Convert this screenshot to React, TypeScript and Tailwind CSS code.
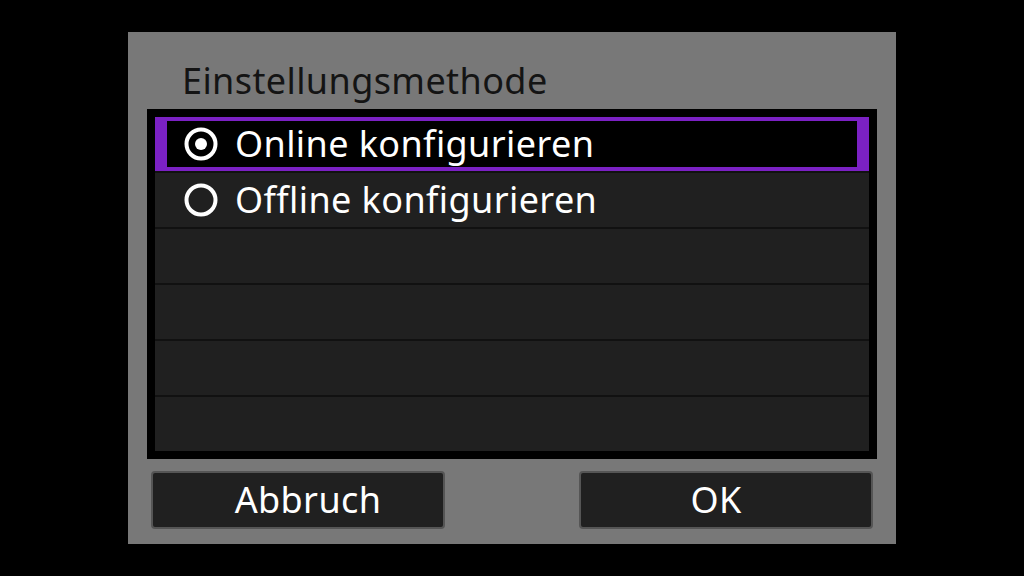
import React from 'react';

const options = ['Online konfigurieren', 'Offline konfigurieren', '', '', '', ''];

const Radio = ({ checked }: { checked: boolean }) => (
  <svg width="34" height="34" viewBox="0 0 34 34" className="shrink-0">
    <circle cx="17" cy="17" r="14.5" fill="none" stroke="white" strokeWidth="4" />
    {checked && <circle cx="17" cy="17" r="6" fill="white" />}
  </svg>
);

const App = () => {
  const selected = 0;

  return (
    <div
      className="w-[1024px] h-[576px] bg-black flex items-center justify-center"
      style={{ fontFamily: '"Noto Sans", "Open Sans", sans-serif' }}
    >
      <div className="w-[768px] h-[512px] bg-[#787878] flex flex-col px-[19px]">
        <div className="mt-[31px] mb-[11px] h-[35px] pl-[35px] text-[36px] tracking-[0.4px] leading-none text-[#141414]">
          Einstellungsmethode
        </div>

        <div className="w-[730px] border-8 border-black bg-[#111111] flex flex-col gap-[2px]">
          {options.map((label, i) =>
            i === selected ? (
              <div
                key={i}
                className="h-[54px] bg-black border-x-[12px] border-y-4 border-[#7b21c4] flex items-center gap-[17px] pl-[17px] text-white text-[36px] tracking-[0.4px] leading-none"
              >
                <Radio checked />
                <span>{label}</span>
              </div>
            ) : (
              <div
                key={i}
                className="h-[54px] bg-[#202020] flex items-center gap-[17px] pl-[29px] text-white text-[36px] tracking-[0.4px] leading-none"
              >
                {label && <Radio checked={false} />}
                {label && <span>{label}</span>}
              </div>
            )
          )}
        </div>

        <div className="mt-[12px] flex justify-between px-[4px]">
          <div className="w-[294px] h-[58px] rounded-[4px] bg-[#202020] border-2 border-[#555555] flex items-center justify-center pl-[20px] text-white text-[36px] tracking-[0.4px] leading-none">
            Abbruch
          </div>
          <div className="w-[294px] h-[58px] rounded-[4px] bg-[#202020] border-2 border-[#555555] flex items-center justify-center pr-[20px] text-white text-[36px] tracking-[0.4px] leading-none">
            OK
          </div>
        </div>
      </div>
    </div>
  );
};

export default App;
